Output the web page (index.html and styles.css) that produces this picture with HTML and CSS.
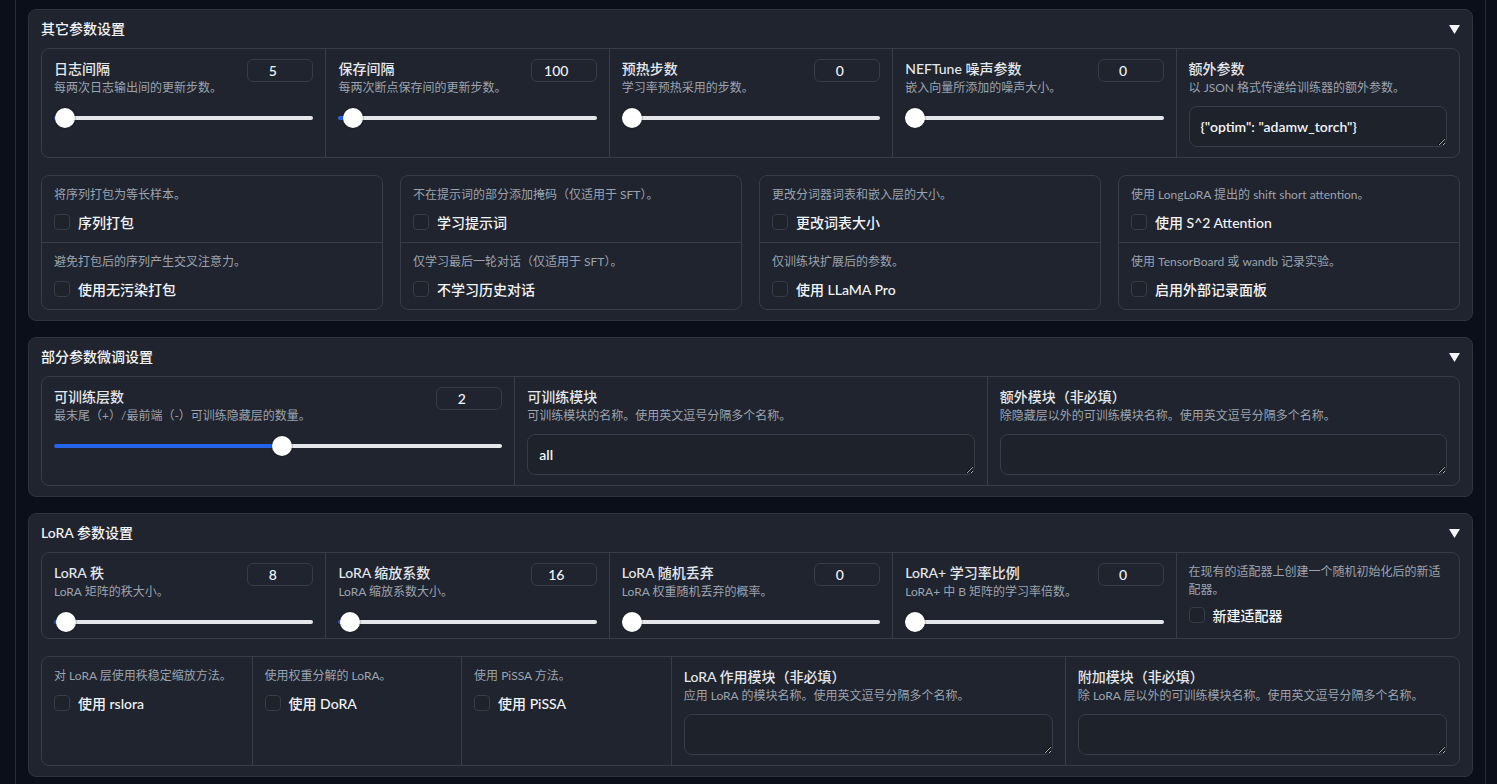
FILE: index.html
```html
<!DOCTYPE html>
<html lang="zh-CN">
<head>
<meta charset="utf-8">
<title>参数设置</title>
<link rel="stylesheet" href="styles.css">
</head>
<body>
<div class="page">

  <section class="panel">
    <div class="panel-head">
      <span class="panel-title">其它参数设置</span>
      <svg class="caret" width="11" height="9" viewBox="0 0 11 9"><polygon points="0,0 11,0 5.5,9" fill="#f3f4f6"/></svg>
    </div>
    <div class="panel-body">
      <div class="row cols-5">
        <div class="field">
          <div class="field-head">
            <div class="field-text"><div class="label">日志间隔</div><div class="desc">每两次日志输出间的更新步数。</div></div>
            <input class="num" value="5" readonly>
          </div>
          <input type="range" class="slider" min="1" max="1000" value="5" style="--p:0.4%">
        </div>
        <div class="field">
          <div class="field-head">
            <div class="field-text"><div class="label">保存间隔</div><div class="desc">每两次断点保存间的更新步数。</div></div>
            <input class="num" value="100" readonly>
          </div>
          <input type="range" class="slider" min="10" max="5000" value="100" style="--p:1.8%">
        </div>
        <div class="field">
          <div class="field-head">
            <div class="field-text"><div class="label">预热步数</div><div class="desc">学习率预热采用的步数。</div></div>
            <input class="num" value="0" readonly>
          </div>
          <input type="range" class="slider" min="0" max="5000" value="0" style="--p:0%">
        </div>
        <div class="field">
          <div class="field-head">
            <div class="field-text"><div class="label">NEFTune 噪声参数</div><div class="desc">嵌入向量所添加的噪声大小。</div></div>
            <input class="num" value="0" readonly>
          </div>
          <input type="range" class="slider" min="0" max="10" value="0" style="--p:0%">
        </div>
        <div class="field">
          <div class="label">额外参数</div>
          <div class="desc">以 JSON 格式传递给训练器的额外参数。</div>
          <textarea class="ta" readonly>{"optim": "adamw_torch"}</textarea>
        </div>
      </div>

      <div class="check-grid">
        <div class="check-box">
          <div class="check-item"><div class="desc">将序列打包为等长样本。</div><label class="check"><input type="checkbox"><span>序列打包</span></label></div>
          <div class="check-item"><div class="desc">避免打包后的序列产生交叉注意力。</div><label class="check"><input type="checkbox"><span>使用无污染打包</span></label></div>
        </div>
        <div class="check-box">
          <div class="check-item"><div class="desc">不在提示词的部分添加掩码（仅适用于 SFT）。</div><label class="check"><input type="checkbox"><span>学习提示词</span></label></div>
          <div class="check-item"><div class="desc">仅学习最后一轮对话（仅适用于 SFT）。</div><label class="check"><input type="checkbox"><span>不学习历史对话</span></label></div>
        </div>
        <div class="check-box">
          <div class="check-item"><div class="desc">更改分词器词表和嵌入层的大小。</div><label class="check"><input type="checkbox"><span>更改词表大小</span></label></div>
          <div class="check-item"><div class="desc">仅训练块扩展后的参数。</div><label class="check"><input type="checkbox"><span>使用 LLaMA Pro</span></label></div>
        </div>
        <div class="check-box">
          <div class="check-item"><div class="desc">使用 LongLoRA 提出的 shift short attention。</div><label class="check"><input type="checkbox"><span>使用 S^2 Attention</span></label></div>
          <div class="check-item"><div class="desc">使用 TensorBoard 或 wandb 记录实验。</div><label class="check"><input type="checkbox"><span>启用外部记录面板</span></label></div>
        </div>
      </div>
    </div>
  </section>

  <section class="panel">
    <div class="panel-head">
      <span class="panel-title">部分参数微调设置</span>
      <svg class="caret" width="11" height="9" viewBox="0 0 11 9"><polygon points="0,0 11,0 5.5,9" fill="#f3f4f6"/></svg>
    </div>
    <div class="panel-body">
      <div class="row cols-3">
        <div class="field">
          <div class="field-head">
            <div class="field-text"><div class="label">可训练层数</div><div class="desc">最末尾（+）/最前端（-）可训练隐藏层的数量。</div></div>
            <input class="num" value="2" readonly>
          </div>
          <input type="range" class="slider" min="-128" max="128" value="2" style="--p:50.8%">
        </div>
        <div class="field">
          <div class="label">可训练模块</div>
          <div class="desc">可训练模块的名称。使用英文逗号分隔多个名称。</div>
          <textarea class="ta" readonly>all</textarea>
        </div>
        <div class="field">
          <div class="label">额外模块（非必填）</div>
          <div class="desc">除隐藏层以外的可训练模块名称。使用英文逗号分隔多个名称。</div>
          <textarea class="ta" readonly></textarea>
        </div>
      </div>
    </div>
  </section>

  <section class="panel">
    <div class="panel-head">
      <span class="panel-title">LoRA 参数设置</span>
      <svg class="caret" width="11" height="9" viewBox="0 0 11 9"><polygon points="0,0 11,0 5.5,9" fill="#f3f4f6"/></svg>
    </div>
    <div class="panel-body">
      <div class="row cols-5">
        <div class="field">
          <div class="field-head">
            <div class="field-text"><div class="label">LoRA 秩</div><div class="desc">LoRA 矩阵的秩大小。</div></div>
            <input class="num" value="8" readonly>
          </div>
          <input type="range" class="slider" min="1" max="1024" value="8" style="--p:0.68%">
        </div>
        <div class="field">
          <div class="field-head">
            <div class="field-text"><div class="label">LoRA 缩放系数</div><div class="desc">LoRA 缩放系数大小。</div></div>
            <input class="num" value="16" readonly>
          </div>
          <input type="range" class="slider" min="1" max="2048" value="16" style="--p:0.73%">
        </div>
        <div class="field">
          <div class="field-head">
            <div class="field-text"><div class="label">LoRA 随机丢弃</div><div class="desc">LoRA 权重随机丢弃的概率。</div></div>
            <input class="num" value="0" readonly>
          </div>
          <input type="range" class="slider" min="0" max="1" step="0.01" value="0" style="--p:0%">
        </div>
        <div class="field">
          <div class="field-head">
            <div class="field-text"><div class="label">LoRA+ 学习率比例</div><div class="desc">LoRA+ 中 B 矩阵的学习率倍数。</div></div>
            <input class="num" value="0" readonly>
          </div>
          <input type="range" class="slider" min="0" max="64" value="0" style="--p:0%">
        </div>
        <div class="field">
          <div class="desc">在现有的适配器上创建一个随机初始化后的新适配器。</div>
          <label class="check check-tight"><input type="checkbox"><span>新建适配器</span></label>
        </div>
      </div>

      <div class="row cols-lora">
        <div class="check-item"><div class="desc">对 LoRA 层使用秩稳定缩放方法。</div><label class="check"><input type="checkbox"><span>使用 rslora</span></label></div>
        <div class="check-item"><div class="desc">使用权重分解的 LoRA。</div><label class="check"><input type="checkbox"><span>使用 DoRA</span></label></div>
        <div class="check-item"><div class="desc">使用 PiSSA 方法。</div><label class="check"><input type="checkbox"><span>使用 PiSSA</span></label></div>
        <div class="field">
          <div class="label">LoRA 作用模块（非必填）</div>
          <div class="desc">应用 LoRA 的模块名称。使用英文逗号分隔多个名称。</div>
          <textarea class="ta" readonly></textarea>
        </div>
        <div class="field">
          <div class="label">附加模块（非必填）</div>
          <div class="desc">除 LoRA 层以外的可训练模块名称。使用英文逗号分隔多个名称。</div>
          <textarea class="ta" readonly></textarea>
        </div>
      </div>
    </div>
  </section>

</div>
</body>
</html>
```
FILE: styles.css
```css
* { box-sizing: border-box; }

html, body { margin: 0; }

body {
  background: #0b0f19;
  color: #e5e7eb;
  font-family: Lato, "Noto Sans CJK SC", sans-serif;
  color-scheme: dark;
}

.page {
  width: 1471px;
  min-height: 784px;
  margin-left: 15px;
  border-left: 1px solid #262b36;
  border-right: 1px solid #262b36;
  padding: 9px 12px 0;
  display: flex;
  flex-direction: column;
  gap: 16px;
}

.panel {
  background: #1f242e;
  border: 1px solid #2e343f;
  border-radius: 8px;
  padding: 9px 12px 10px;
}

.panel-head {
  height: 20px;
  margin-bottom: 9px;
  display: flex;
  align-items: center;
  justify-content: space-between;
}

.panel-title {
  font-size: 14px;
  font-weight: 500;
  line-height: 20px;
  color: #f3f4f6;
}

.caret { display: block; }

.panel-body {
  display: flex;
  flex-direction: column;
  gap: 17px;
}

.row {
  display: grid;
  border: 1px solid #363c48;
  border-radius: 8px;
}

.cols-5 { grid-template-columns: repeat(5, 1fr); }
.cols-3 { grid-template-columns: repeat(3, 1fr); }
.cols-lora { grid-template-columns: 210fr 210fr 210fr 395fr 395fr; }

.row > * + * { border-left: 1px solid #363c48; }

.field {
  min-width: 0;
  padding: 10px 12px;
  display: flex;
  flex-direction: column;
}

.field-head {
  display: flex;
  align-items: flex-start;
  justify-content: space-between;
  gap: 8px;
}

.field-text { min-width: 0; }

.label {
  font-size: 14px;
  font-weight: 500;
  line-height: 20px;
  color: #e5e7eb;
  white-space: nowrap;
}

.desc {
  font-size: 12px;
  line-height: 18px;
  color: #9ca3af;
}

.num {
  flex: none;
  width: 66px;
  height: 23px;
  margin: 0;
  padding: 0 15px 0 0;
  border: 1px solid #363c48;
  border-radius: 6px;
  background: #1f242e;
  color: #f3f4f6;
  font: 500 14px Lato, "Noto Sans CJK SC", sans-serif;
  text-align: center;
  outline: none;
}

.slider {
  -webkit-appearance: none;
  appearance: none;
  display: block;
  width: 100%;
  height: 20px;
  margin: 11px 0 -4px;
  background: transparent;
}

.slider::-webkit-slider-runnable-track {
  height: 4px;
  border-radius: 2px;
  background: linear-gradient(to right, #2563eb var(--p), #e5e7eb var(--p));
}

.slider::-webkit-slider-thumb {
  -webkit-appearance: none;
  appearance: none;
  width: 20px;
  height: 20px;
  margin-top: -8px;
  border-radius: 50%;
  background: #ffffff;
  box-shadow: 0 0 2px rgba(0, 0, 0, 0.6);
}

.ta {
  display: block;
  width: 100%;
  height: 41px;
  margin-top: 9px;
  padding: 10px 11px;
  border: 1px solid #363c48;
  border-radius: 8px;
  background: #1d222b;
  color: #f3f4f6;
  font: 600 14px/20px Lato, "Noto Sans CJK SC", sans-serif;
  resize: vertical;
  overflow: hidden;
  outline: none;
}

.check-grid {
  display: grid;
  grid-template-columns: repeat(4, 1fr);
  gap: 17px;
}

.check-box {
  border: 1px solid #363c48;
  border-radius: 8px;
}

.check-item {
  min-width: 0;
  padding: 10px 12px;
}

.check-box .check-item + .check-item { border-top: 1px solid #363c48; }

.check {
  display: flex;
  align-items: center;
  gap: 8px;
  height: 20px;
  margin-top: 8px;
  font-size: 14px;
  font-weight: 500;
  color: #f3f4f6;
}

.check-tight { margin-top: 6px; }

.check input {
  -webkit-appearance: none;
  appearance: none;
  flex: none;
  width: 16px;
  height: 16px;
  margin: 0;
  border: 1px solid #363c48;
  border-radius: 4px;
  background: #1d222b;
}
```
